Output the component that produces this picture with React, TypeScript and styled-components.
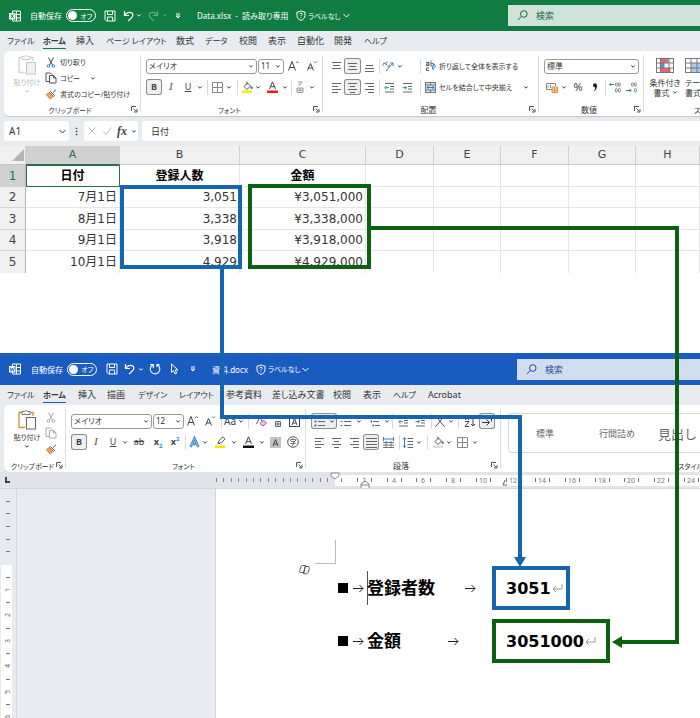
import React from 'react';
import styled, { createGlobalStyle } from 'styled-components';

const UI_FONT = '"Noto Sans", "Noto Sans CJK JP", sans-serif';
const CELL_FONT = '"DejaVu Sans", "Noto Sans CJK JP", sans-serif';
const BLUE = '#1467ae';
const GREEN = '#0b610e';

const GlobalStyle = createGlobalStyle`
  *, *::before, *::after { box-sizing: border-box; }
  html, body { margin: 0; padding: 0; background: #fff; }
  body { font-family: ${UI_FONT}; font-size: 9px; color: #333; overflow-x: hidden; }
  button, input, select { font: inherit; color: inherit; margin: 0; padding: 0; border: 0; background: none; min-width: 0; }
  svg { display: block; flex: none; overflow: visible; }
`;

/* ---------- layout parts ---------- */

const Page = styled.div`
  position: relative;
  display: flex;
  flex-direction: column;
  min-height: 100vh;
  overflow: hidden;
`;

const ExcelWindow = styled.section`
  background: #e8ecf0;
  margin-bottom: 80px;
`;

const WordWindow = styled.section`
  flex: 1;
  display: flex;
  flex-direction: column;
  background: #e8ecf0;
`;

const TitleBar = styled.header<{ $bg: string; $h: number }>`
  display: flex;
  align-items: center;
  height: ${p => p.$h}px;
  background: ${p => p.$bg};
  color: #fff;
`;

const TitleTools = styled.div<{ $cols: string; $w: number }>`
  display: grid;
  flex: 0 0 ${p => p.$w}px;
  grid-template-columns: ${p => p.$cols};
  align-items: center;
  padding-left: 9px;
  white-space: nowrap;
`;

const TitleText = styled.span<{ $small?: boolean }>`
  font-size: ${p => (p.$small ? 7 : 8)}px;
  font-feature-settings: "palt";
`;

const IconButton = styled.button<{ $dim?: boolean }>`
  display: flex;
  align-items: center;
  opacity: ${p => (p.$dim ? 0.35 : 1)};
`;

const Toggle = styled.label`
  display: flex;
  align-items: center;
  gap: 3px;
  width: 30px;
  height: 13px;
  padding: 0 1px;
  border: 1px solid #fff;
  border-radius: 7px;
`;

const ToggleKnob = styled.input`
  appearance: none;
  width: 9px;
  height: 9px;
  border-radius: 50%;
  background: #fff;
  flex: none;
`;

const SearchBox = styled.label<{ $bg: string; $fg: string }>`
  display: flex;
  flex: 1;
  align-items: center;
  gap: 8px;
  height: 21px;
  padding-left: 9px;
  background: ${p => p.$bg};
  color: ${p => p.$fg};
  input { flex: 1; font-size: 9px; }
  input::placeholder { color: ${p => p.$fg}; opacity: 1; }
`;

const TabRow = styled.nav<{ $cols: string }>`
  display: grid;
  grid-template-columns: ${p => p.$cols};
  justify-content: start;
  align-items: start;
  height: 20px;
  padding: 3px 0 0 7px;
`;

const Tab = styled.button<{ $active?: boolean; $line: string; $small?: boolean }>`
  justify-self: start;
  height: 15px;
  font-size: ${p => (p.$small ? 8 : 9)}px;
  line-height: 14px;
  white-space: nowrap;
  font-feature-settings: "palt";
  font-weight: ${p => (p.$active ? 700 : 400)};
  border-bottom: 1px solid ${p => (p.$active ? p.$line : 'transparent')};
`;

const Ribbon = styled.div<{ $h: number }>`
  display: flex;
  height: ${p => p.$h}px;
  margin-left: 4px;
  background: #fff;
  border-radius: 5px 0 0 5px;
  box-shadow: 0 1px 1px #c3c8ce;
  overflow: hidden;
`;

const Group = styled.div<{ $w?: number; $top: number }>`
  display: flex;
  flex-direction: column;
  flex: ${p => (p.$w ? `0 0 ${p.$w}px` : '1 0 0')};
  min-width: 0;
  padding: ${p => p.$top}px 0 0 5px;
  background: linear-gradient(#dcdcdc, #dcdcdc) right 4px / 1px calc(100% - 8px) no-repeat;
  &:last-child { background: none; }
`;

const GroupRows = styled.div`
  display: flex;
  flex-direction: column;
  gap: 5px;
`;

const GroupFoot = styled.div<{ $start?: number; $small?: boolean }>`
  display: flex;
  align-items: center;
  height: 13px;
  margin-top: auto;
  padding-left: ${p => p.$start ?? 0}px;
  font-size: ${p => (p.$small ? 7 : 8)}px;
  white-space: nowrap;
  font-feature-settings: "palt";
  span { flex: ${p => (p.$start ? 'none' : 1)}; text-align: center; }
  button { width: 10px; }
`;

const ToolRow = styled.div`
  display: flex;
  align-items: center;
  height: 16px;
`;

const Tool = styled.button<{ $w: number; $on?: boolean }>`
  display: flex;
  align-items: center;
  justify-content: center;
  flex: 0 0 ${p => p.$w}px;
  height: 16px;
  border-radius: 3px;
  background: ${p => (p.$on ? '#efefef' : 'none')};
  box-shadow: ${p => (p.$on ? 'inset 0 0 0 1px #8d8d8d' : 'none')};
`;

const Divider = styled.span<{ $w: number }>`
  flex: 0 0 ${p => p.$w}px;
  height: 15px;
  background: linear-gradient(#d9d9d9, #d9d9d9) center / 1px 100% no-repeat;
`;

const TextTool = styled.button<{ $w: number }>`
  display: flex;
  align-items: center;
  gap: 3px;
  flex: 0 0 ${p => p.$w}px;
  height: 16px;
  font-size: 7px;
  white-space: nowrap;
  font-feature-settings: "palt";
`;

const SelectFrame = styled.span<{ $w: number }>`
  display: grid;
  grid-template-columns: 1fr;
  align-items: center;
  flex: 0 0 ${p => p.$w}px;
  height: 15px;
  margin-right: 1px;
  border: 1px solid #9a9a9a;
  border-radius: 3px;
  > * { grid-area: 1 / 1; }
  svg { justify-self: end; margin-right: 3px; pointer-events: none; }
  select { appearance: none; width: 100%; height: 13px; padding-left: 2px; font-size: 8px; line-height: 12px; font-feature-settings: "palt"; }
`;

const Clipboard = styled.div`
  display: flex;
  height: 50px;
`;

const PasteButton = styled.button<{ $dim?: boolean; $w: number }>`
  display: flex;
  flex-direction: column;
  align-items: center;
  flex: 0 0 ${p => p.$w}px;
  gap: 2px;
  height: 44px;
  font-size: 7px;
  line-height: 11px;
  white-space: nowrap;
  font-feature-settings: "palt";
  opacity: ${p => (p.$dim ? 0.38 : 1)};
`;

const ClipList = styled.div`
  display: flex;
  flex-direction: column;
`;

const BigTool = styled.button<{ $w: number; $left?: boolean }>`
  display: flex;
  flex-direction: column;
  align-items: ${p => (p.$left ? 'flex-start' : 'center')};
  flex: 0 0 ${p => p.$w}px;
  gap: 1px;
  font-size: 8px;
  line-height: 9px;
  white-space: nowrap;
  font-feature-settings: "palt";
  svg + span { margin-top: 4px; }
  span { display: flex; align-items: center; gap: 3px; height: 9px; }
`;

const BigTools = styled.div`
  display: flex;
  gap: 4px;
`;

const FormulaBar = styled.div`
  display: flex;
  align-items: center;
  height: 30px;
  padding-left: 4px;
`;

const NameBox = styled.label`
  display: flex;
  align-items: center;
  width: 65px;
  height: 20px;
  padding: 0 3px 0 5px;
  background: #fff;
  border-radius: 3px;
  input { flex: 1; width: 40px; font-size: 10px; }
`;

const Dots = styled.span`
  flex: 0 0 15px;
  text-align: center;
  font-weight: 700;
`;

const FormulaTools = styled.div`
  display: flex;
  align-items: center;
  width: 54px;
  height: 20px;
  margin-right: 4px;
  background: #fff;
  border-radius: 3px;
`;

const FormulaInput = styled.input`
  flex: 1;
  height: 20px;
  padding-left: 9px;
  background: #fff;
  border-radius: 3px 0 0 3px;
  font-size: 9px;
`;

const Sheet = styled.table`
  width: 100%;
  table-layout: fixed;
  border-collapse: separate;
  border-spacing: 0;
  background: #fff;
  font-family: ${CELL_FONT};
  font-size: 12px;
  line-height: 16px;
`;

const ColHead = styled.th<{ $active?: boolean }>`
  height: 19px;
  padding: 0;
  font-weight: 400;
  font-size: 11px;
  color: ${p => (p.$active ? '#28704a' : '#444')};
  background: ${p => (p.$active ? '#d0d0d0' : '#f0f0f0')};
  border-right: 1px solid ${p => (p.$active ? '#d0d0d0' : '#cfcfcf')};
  border-bottom: 1px solid ${p => (p.$active ? '#28704a' : '#c6c6c6')};
  svg { margin-left: auto; margin-right: 1px; }
`;

const RowHead = styled.th<{ $active?: boolean }>`
  padding: 0;
  font-weight: 400;
  color: ${p => (p.$active ? '#28704a' : '#444')};
  background: ${p => (p.$active ? '#d0d0d0' : '#f0f0f0')};
  border-right: 1px solid #b5b5b5;
  border-bottom: 1px solid #d5d5d5;
`;

const Cell = styled.td<{ $head?: boolean; $selected?: boolean }>`
  height: ${p => (p.$head ? 22 : 21)}px;
  padding: 0 2px;
  text-align: ${p => (p.$head ? 'center' : 'right')};
  font-weight: ${p => (p.$head ? 700 : 400)};
  color: ${p => (p.$head ? '#000' : '#333')};
  border-right: 1px solid #e6e6e6;
  border-bottom: 1px solid #e6e6e6;
  ${p => (p.$selected ? 'border-color: #28704a; outline: 1px solid #28704a; outline-offset: -1px;' : '')}
`;

const DataRow = styled.tr<{ $tall?: boolean }>`
  height: ${p => (p.$tall ? 22 : 21)}px;
  &:last-child > * { border-bottom: 0; }
`;

const Gallery = styled.div`
  display: flex;
  align-items: center;
  height: 40px;
  margin-left: 2px;
  border: 1px solid #d8d8d8;
  border-right: 0;
  border-radius: 4px 0 0 4px;
  overflow: hidden;
`;

const StyleItem = styled.button<{ $w: number; $size: number }>`
  flex: 0 0 ${p => p.$w}px;
  font-size: ${p => p.$size}px;
  color: #666;
  white-space: nowrap;
`;

const RulerStrip = styled.div`
  height: 17px;
  background: #e1e5ea;
  border-bottom: 1px solid #d3d8de;
  overflow: hidden;
`;

const DocumentArea = styled.div`
  flex: 1;
  display: flex;
  min-height: 229px;
`;

const SideRuler = styled.div`
  flex: 0 0 17px;
  border-right: 1px solid #d3d8de;
  overflow: hidden;
  height: 229px;
`;

const Desk = styled.div`
  flex: 0 0 199px;
  border-right: 1px solid #cfd4da;
`;

const Paper = styled.main`
  position: relative;
  flex: 1;
  display: flex;
  flex-direction: column;
  gap: 9px;
  padding: 77px 0 0 121px;
  background: #fff;
  color: #000;
`;

const MarginCorner = styled.span`
  position: absolute;
  left: 99px;
  top: 51px;
  width: 21px;
  height: 24px;
  border-right: 1px solid #bbb;
  border-bottom: 1px solid #bbb;
`;

const CopilotMark = styled.button`
  position: absolute;
  left: 83px;
  top: 75px;
`;

const Paragraph = styled.p`
  display: flex;
  align-items: center;
  height: 44px;
  margin: 0;
  font-family: ${CELL_FONT};
  font-weight: 700;
`;

const Bullet = styled.span`
  width: 10px;
  height: 10px;
  margin: 0 5px 0 1px;
  background: #000;
`;

const Lead = styled.span`
  display: flex;
  flex: 0 0 125px;
  align-items: center;
  font-size: 17px;
  line-height: 20px;
`;

const BulletTab = styled.span`
  flex: 0 0 14px;
`;

const Caret = styled.span`
  width: 1px;
  height: 34px;
  margin-right: -1px;
  background: #555;
`;

const TabMark = styled.span`
  display: flex;
  flex: 1;
  justify-content: center;
  padding-left: 14px;
`;

const ValueBox = styled.span<{ $color: string; $w: number }>`
  display: flex;
  align-items: center;
  gap: 1px;
  width: ${p => p.$w}px;
  height: 44px;
  padding-left: 10px;
  border: 4px solid ${p => p.$color};
  font-size: 16px;
`;

const Annotations = styled.svg`
  position: absolute;
  left: 0;
  top: 0;
  pointer-events: none;
`;

/* ---------- icons ---------- */

type IconProps = { w?: number; h?: number; children: React.ReactNode; c?: string; sw?: number };
const Icon = ({ w = 12, h = 12, c = 'currentColor', sw = 1, children }: IconProps) => (
  <svg width={w} height={h} viewBox={`0 0 ${w} ${h}`} fill="none" stroke={c} strokeWidth={sw} aria-hidden="true">
    {children}
  </svg>
);

const Chev = ({ big = false }: { big?: boolean }) =>
  big ? <Icon w={7} h={5}><path d="M.5 1l3 3 3-3" /></Icon> : <Icon w={4} h={3}><path d="M.3.5L2 2.2 3.7.5" /></Icon>;

const AppLogo = ({ letter }: { letter: string }) => (
  <Icon w={12} h={12}>
    <path d="M3.5 3V1h8v10h-8V9M7.5 1v10M7.5 4.5h4M7.5 8h4" />
    <rect x="0" y="3" width="6.5" height="6.5" fill="currentColor" stroke="none" />
    {letter === 'X' ? <path d="M1.8 4.2l3 4M4.8 4.2l-3 4" stroke="#107c41" /> : <path d="M1 4.4l1.1 3.8 1.2-3.2 1.2 3.2 1-3.8" stroke="#185abd" strokeWidth=".8" />}
  </Icon>
);
const SaveIcon = () => <Icon><path d="M1 1h10v10H2.5L1 9.5zM3.5 1v3.5h5V1M3.5 11V7h5v4" /></Icon>;
const UndoIcon = () => <Icon w={11} sw={1.2}><path d="M1.5 1v4.5H6M1.5 5.5C4 1.5 9.800 1.200 9.800 5c0 2.500-2.300 3.800-4.800 6" /></Icon>;
const RedoIcon = () => <Icon w={11} sw={1.2}><path d="M9.500 1v4.500H5M9.500 5.500C7 1.500 1.200 1.200 1.200 5c0 2.500 2.300 3.800 4.800 6" /></Icon>;
const RepeatIcon = () => <Icon sw={1.1}><path d="M4 1.700A4.800 4.800 0 1 0 8.300 1.800M4.300 5V1.500H1M10.500 1.500H8V4" /></Icon>;
const PointerIcon = () => <Icon w={9} h={12}><path d="M1.500 1v8.500l2-2 1.600 3.500 1.600-.8L5.200 7H8z" /></Icon>;
const CustomizeIcon = () => <Icon w={6} h={6}><path d="M1 1h4M1 3h4L3 5z" /></Icon>;
const ShieldIcon = () => (
  <Icon w={10} h={11}><path d="M5 .8c1.200.8 2.500 1.200 4 1.200v3.500C9 8 7.500 9.500 5 10.400 2.500 9.500 1 8 1 5.500V2c1.500 0 2.800-.4 4-1.200zM3.700 4.200C3.700 2.800 6.300 2.800 6.300 4.200 6.300 5 5 5 5 6.200M5 7.300v.8" /></Icon>
);
const SearchIcon = () => <Icon w={11} h={11}><circle cx="6.800" cy="4" r="3.300" /><path d="M4.400 6.400L.8 10" /></Icon>;
const Launcher = () => <Icon w={7} h={7} c="#555"><path d="M.5 5V.5H5M2.500 2.500l3 3M6 3v3H3" /></Icon>;

const PasteIcon = ({ dim = false }: { dim?: boolean }) => {
  const board = dim ? '#888' : '#dd8a3a';
  return (
    <Icon w={20} h={21} c={board}>
      <path d="M8 18.500H2v-15h3M13 3.500h3V7" strokeWidth="1.300" />
      <path d="M5 5.500v-3h2.500a1.700 1.700 0 0 1 3 0H13v3z" stroke="#777" fill="#fff" />
      <rect x="9.500" y="8.500" width="9" height="11.500" fill={dim ? '#ddd' : '#fff'} stroke="#666" />
    </Icon>
  );
};
const CutIcon = ({ dim = false }: { dim?: boolean }) => (
  <Icon w={12} h={11} c={dim ? '#aaa' : '#444'}>
    <path d="M3.500.5l4 7.500M8.500.5l-4 7.500" />
    <circle cx="3.500" cy="9" r="1.300" stroke={dim ? '#aaa' : '#2f86c8'} /><circle cx="8.500" cy="9" r="1.300" stroke={dim ? '#aaa' : '#2f86c8'} />
  </Icon>
);
const CopyIcon = ({ dim = false }: { dim?: boolean }) => (
  <Icon w={12} h={12} c={dim ? '#aaa' : '#555'}><path d="M4 9.500H1V1h4.500L7 2.500M4.500 3.500h4l2.500 2.500v5H4.500zM8.500 3.500V6H11" /></Icon>
);
const BrushIcon = () => (
  <Icon w={12} h={11} c="#555"><path d="M11 .8L8 3.500M5.500 2.500l4 4-1 1-4-4z" /><path d="M4.200 3.700L1.300 5.500l4 4.700L7.800 7.300z" fill="#f3a65a" stroke="#d9822b" /></Icon>
);

type TextIconProps = { t: string; size?: number; bold?: boolean; italic?: boolean; under?: boolean; strike?: boolean; c?: string; serif?: boolean };
const Glyph = styled.span<{ $size: number; $b?: boolean; $i?: boolean; $u?: boolean; $s?: boolean; $c: string; $serif?: boolean }>`
  font-family: ${p => (p.$serif ? '"Liberation Serif", serif' : UI_FONT)};
  font-size: ${p => p.$size}px;
  line-height: 12px;
  font-weight: ${p => (p.$b ? 700 : 400)};
  font-style: ${p => (p.$i ? 'italic' : 'normal')};
  text-decoration: ${p => (p.$u ? 'underline' : p.$s ? 'line-through' : 'none')};
  color: ${p => p.$c};
  sub, sup { font-size: 6px; line-height: 0; color: #2f7fc0; }
`;
const G = ({ t, size = 9, bold, italic, under, strike, c = '#444', serif }: TextIconProps) => (
  <Glyph $size={size} $b={bold} $i={italic} $u={under} $s={strike} $c={c} $serif={serif}>{t}</Glyph>
);

const SizeIcon = ({ down = false }: { down?: boolean }) => (
  <Icon w={12} h={12} c="#444">
    <path d={down ? 'M1.500 10.500L4.500 3.500l3 7M2.500 8h4' : 'M.5 10.500L4 1.500l3.500 9M1.700 7.500h4.600'} />
    <path d={down ? 'M8 1.500l1.500 1.500L11 1.500' : 'M8 3l1.500-1.500L11 3'} stroke="#2f7fc0" />
  </Icon>
);
const BordersIcon = () => <Icon w={11} h={11} c="#888"><path d="M.5.5h10v10H.5zM5.500.5v10M.5 5.500h10" /></Icon>;
const FillIcon = ({ bar = '#f4ec00' }: { bar?: string }) => (
  <Icon w={11} h={12} c="#555"><path d="M2 5.500L5.500 2l3 3L5 8.500zM5 .5v3" /><path d="M9.700 5.500c1 1.500 1 2-.1 2s-1-.6.1-2" stroke="#2f7fc0" fill="#2f7fc0" /><rect x="0" y="9.500" width="10" height="2.500" fill={bar} stroke="none" /></Icon>
);
const FontColorIcon = ({ bar = '#e02020' }: { bar?: string }) => (
  <Icon w={11} h={12} c="#444"><path d="M2.500 8L5.500.8 8.500 8M3.500 5.700h4" /><rect x="0" y="9.500" width="11" height="2.500" fill={bar} stroke="none" /></Icon>
);
const MarkerIcon = () => <Icon w={11} h={12} c="#555"><path d="M3 7.500l1-3L8 .8l2 2-3.700 4zM3 7.500h2" /><rect x="0" y="9.500" width="10" height="2.500" fill="#f4ec00" stroke="none" /></Icon>;
const RubyIcon = () => <Icon w={8} h={12} c="#999"><path d="M2 1h4L4.500 3.500M3.500 2.500L3 5M1 7h6v4.500H1zM4 7v4.500M1 9.200h6" /></Icon>;
const EffectIcon = () => <Icon w={11} h={11}><path d="M1.500 10L5.500 1.300 9.500 10M3 7h5" stroke="#2f7fc0" strokeWidth="2.300" /><path d="M1.500 10L5.500 1.300 9.500 10M3 7h5" stroke="#bfe0f7" strokeWidth=".6" /></Icon>;

type LinesProps = { rows: [number, number, number][]; w?: number };
const Lines = ({ rows, w = 11 }: LinesProps) => (
  <Icon w={w} h={11} c="#666">{rows.map(([y, a, b]) => <path key={y} d={`M${a} ${y}.5H${b}`} />)}</Icon>
);
const TopIcon = () => <Lines rows={[[1, 1, 10], [4, 2, 9], [7, 1, 10]]} />;
const MidIcon = () => <Lines rows={[[2, 1, 10], [5, 2, 9], [8, 1, 10]]} />;
const BottomIcon = () => <Lines rows={[[4, 2, 9], [7, 1, 10], [10, 1, 10]]} />;
const LeftIcon = () => <Lines rows={[[1, 1, 10], [4, 1, 7], [7, 1, 10], [10, 1, 7]]} />;
const CenterIcon = () => <Lines rows={[[1, 1, 10], [4, 3, 8], [7, 1, 10], [10, 3, 8]]} />;
const RightIcon = () => <Lines rows={[[1, 1, 10], [4, 4, 10], [7, 1, 10], [10, 4, 10]]} />;
const JustifyIcon = () => <Lines rows={[[1, 0, 11], [4, 0, 11], [7, 0, 11], [10, 0, 11]]} />;
const DistributeIcon = () => <Icon w={11} h={11} c="#2f7fc0"><path d="M.5 0v4M10.500 0v4M1 2h9" /><path d="M0 5.500h11M0 8h11M0 10.500h11M3 4v6M8 4v6" stroke="#777" /></Icon>;
const IndentIcon = ({ out = false }: { out?: boolean }) => (
  <Icon w={11} h={11} c="#666"><path d="M1 1.500h9M6 4.500h4M6 7h4M1 10h9" /><path d={out ? 'M5 5.700H1M2.500 4L1 5.700l1.500 1.700' : 'M.5 5.700h4M3 4l1.500 1.700L3 7.400'} stroke="#2f7fc0" /></Icon>
);
const OrientIcon = () => <Icon w={12} h={12} c="#555"><path d="M1.500 5.500a1.300 1.300 0 1 1 2-1.500l1.500 1M4 3.500l1.500-2M5.500 6.500c1.500.5 2-1 1.500-2" /><path d="M4 11l7-8M8 3h3v3" stroke="#2f7fc0" /></Icon>;
const WrapIcon = () => <Icon w={11} h={12} c="#555"><path d="M1 2.500h3v3H1.500V4H4M1.500 8h2.500M1.500 10.500H4M1.500 8v2.500" /><path d="M6 .5V6h2.500V3.500H6M7 8h1.500c2.500 0 2-4 0-4M8.500 6.500L7 8l1.500 2" stroke="#2f7fc0" /></Icon>;
const MergeIcon = () => <Icon w={11} h={11} c="#2f7fc0"><rect x=".5" y=".5" width="10" height="10" fill="#cfe6f7" stroke="#777" /><path d="M.5 3h10M.5 8h10M5.500.5V3M5.500 8v2.500" stroke="#777" /><path d="M2 5.500h7M3.500 4L2 5.500 3.500 7M7.500 4L9 5.500 7.500 7" /></Icon>;
const MoneyIcon = () => <Icon w={12} h={12} c="#888"><path d="M6 8.500H.5v-6h9V5M2 4.500v2M4.500 4v3" /><path d="M6 6h5.500v5.500H6zM6 8h5.500M6 9.800h5.500M8.700 6v5.500" stroke="#e08a30" /></Icon>;
const CommaIcon = () => <Icon w={6} h={9}><path d="M1 2.300a2 2 0 1 1 4 0C5 5.500 4 7.500 1.500 8.500 3 7 3.300 5.500 3 4.300 1.800 4.300 1 3.500 1 2.300z" fill="#222" stroke="none" /></Icon>;
const DecimalIcon = ({ dec = false }: { dec?: boolean }) => (
  <Icon w={12} h={11} c="#888"><rect x="6.500" y=".8" width="1.800" height="3.500" rx=".9" /><rect x="9.500" y=".8" width="1.800" height="3.500" rx=".9" /><rect x="9.500" y="6.500" width="1.800" height="3.500" rx=".9" />{!dec && <rect x="6.500" y="6.500" width="1.800" height="3.500" rx=".9" />}
    <path d={dec ? 'M1 8.500h5M4.500 7L6 8.500 4.500 10' : 'M5 2.500H.8M2.300 1L.8 2.500 2.300 4'} stroke="#2f7fc0" /></Icon>
);
const CondIcon = () => (
  <Icon w={18} h={15} c="#777"><rect x=".5" y=".5" width="17" height="14" fill="#fff" /><rect x="4.500" y="1" width="8" height="4" fill="#ee6374" stroke="none" /><rect x="4.500" y="5" width="4" height="5" fill="#4f93d2" stroke="none" /><rect x="4.500" y="10" width="10" height="4" fill="#ee6374" stroke="none" /><path d="M.5 5h17M.5 10h17M4.500.5v14M13 .5v14" /></Icon>
);
const TableIcon = () => <Icon w={18} h={15} c="#777"><rect x=".5" y=".5" width="17" height="14" fill="#fff" /><rect x="6" y="5" width="11" height="9" fill="#a9cdec" stroke="none" /><path d="M.5 5h17M.5 10h17M6 .5v14M12 .5v14" /></Icon>;
const BulletsIcon = ({ kind = 0 }: { kind?: number }) => (
  <Icon w={12} h={11} c="#666"><path d={kind === 2 ? 'M3 1.500h7M5 5.500h6M7 9.500h5' : 'M4 1.500h7M4 5.500h7M4 9.500h7'} /><path d={kind === 2 ? 'M0 1.500h1.500M2.500 5.500H4M4.500 9.500H6' : 'M.5 1.500H2.500M.5 5.500H2.500M.5 9.500H2.500'} stroke="#2f7fc0" strokeWidth={kind === 1 ? 1 : 2} /></Icon>
);
const SpacingIcon = () => <Icon w={12} h={11} c="#666"><path d="M5.500 1.500H11M5.500 4.500H11M5.500 7.500H11M5.500 10.500H11" /><path d="M2.500.5v10M1 2.500L2.500.5 4 2.500M1 8.500l1.500 2 1.500-2" stroke="#2f7fc0" /></Icon>;
const AsianIcon = () => <Icon w={12} h={11} c="#444"><path d="M1.500 10.500L6 5.500l4.500 5M6 5.500L3 1M6 5.500L9 1" /></Icon>;
const SortIcon = () => <Icon w={12} h={11} c="#444"><path d="M1 5.500h4l-4 5h4M1.500 4L3 .5 4.500 4M9 .5v9.500M7 8l2 2 2-2" /></Icon>;
const MarksIcon = () => <Icon w={12} h={11} c="#333"><path d="M1 6.500h7M5.500 3.500l3 3-3 3M10.500 1.500v4" /></Icon>;
const EraserIcon = () => <Icon w={11} h={12} c="#555"><path d="M.5 9L4 1.500 6.500 7" /><path d="M4 8.500l3.500-3.500 3 3L7 11z" stroke="#9c4bb5" fill="#e7c9f0" /></Icon>;
const RubyBoxIcon = () => <Icon w={10} h={12} c="#666"><path d="M3.500 1h3M5 1v3M2.500 6.500h5v5h-5zM2.500 9h5M5 6.500v5" /></Icon>;
const BoxAIcon = ({ fill = 'none' }: { fill?: string }) => <Icon w={11} h={11} c="#444"><rect x=".5" y=".5" width="10" height="10" fill={fill} stroke={fill === 'none' ? '#444' : fill} /><path d="M3 9l2.500-6.500L8 9M4 7h3" /></Icon>;
const CircledIcon = () => <Icon w={12} h={12} c="#555"><circle cx="6" cy="6" r="5.300" /><path d="M6 2v1.500M3.500 5V3.500h5V5M4 5.500h4L6 7v2.500H5M3.500 7.500h5" strokeWidth=".8" /></Icon>;
const ArrowMark = () => <Icon w={11} h={9} c="#222"><path d="M0 4.500h10M6.500 1l3.500 3.500L6.500 8" /></Icon>;
const ReturnMark = () => <Icon w={11} h={10} c="#999"><path d="M10 1v5H1M4 3L1 6l3 3" /></Icon>;
const CopilotIcon = () => <Icon w={11} h={11} c="#555"><path d="M4 1.500h2.500L4.700 8.500H2C.5 8.500.5 7 1 5.500L1.800 3C2.200 2 3 1.500 4 1.500zM7 9.800H4.500L6.300 2.500H9c1.500 0 1.500 1.500 1 3L9.200 8.300C8.800 9.300 8 9.800 7 9.800z" /></Icon>;

/* ---------- shared pieces ---------- */

type Item = { sep: number } | { gap: number } | { icon: React.ReactNode; w: number; on?: boolean; label: string };
const Gap = styled.span<{ $w: number }>`flex: 0 0 ${p => p.$w}px;`;

const Tools = ({ items }: { items: Item[] }) => (
  <>
    {items.map((it, i) =>
      'sep' in it ? <Divider key={i} $w={it.sep} /> :
      'gap' in it ? <Gap key={i} $w={it.gap} /> :
      <Tool key={i} type="button" $w={it.w} $on={it.on} aria-label={it.label}>{it.icon}</Tool>
    )}
  </>
);
const more = (w: number): Item => ({ icon: <Chev />, w, label: 'その他' });

const Pick = ({ value, w, label }: { value: string; w: number; label: string }) => (
  <SelectFrame $w={w}>
    <select aria-label={label} defaultValue={value}><option>{value}</option></select>
    <Chev />
  </SelectFrame>
);

const Foot = ({ text, start, launch = true }: { text: string; start?: number; launch?: boolean }) => (
  <GroupFoot $start={start} $small={/^[ァ-ヴー]+$/.test(text)}>
    <span>{text}</span>
    {launch && <button type="button" aria-label={`${text}の設定`}><Launcher /></button>}
  </GroupFoot>
);

const AutoSave = () => (
  <Toggle><ToggleKnob type="checkbox" role="switch" aria-label="自動保存" /><TitleText $small>オフ</TitleText></Toggle>
);

const Search = ({ bg, fg }: { bg: string; fg: string }) => (
  <SearchBox $bg={bg} $fg={fg}><SearchIcon /><input type="search" placeholder="検索" aria-label="検索" /></SearchBox>
);

const Btn = ({ label, dim, children }: { label: string; dim?: boolean; children: React.ReactNode }) => (
  <IconButton type="button" aria-label={label} $dim={dim}>{children}</IconButton>
);

const Tabs = ({ names, cols, line }: { names: string[]; cols: string; line: string }) => (
  <TabRow $cols={cols}>
    {names.map(n => (
      <Tab key={n} type="button" $active={n === 'ホーム'} $line={line} $small={/^[ァ-ヴー ]+$/.test(n)}>{n}</Tab>
    ))}
  </TabRow>
);

/* ---------- Excel ---------- */

const sheetRows = [
  ['7月1日', '3,051', '¥3,051,000'],
  ['8月1日', '3,338', '¥3,338,000'],
  ['9月1日', '3,918', '¥3,918,000'],
  ['10月1日', '4,929', '¥4,929,000'],
];
const colNames = ['A', 'B', 'C', 'D', 'E', 'F', 'G', 'H'];
const colWidths = [26, 94, 120, 126, 68, 67, 68, 67];

const Excel = () => (
  <ExcelWindow>
    <TitleBar $bg="#107c41" $h={31}>
      <TitleTools $w={508} $cols="21px 36px 38px 19px 14px 11px 15px 12px 22px 99px 12px 35px 8px">
        <AppLogo letter="X" />
        <TitleText>自動保存</TitleText>
        <AutoSave />
        <Btn label="保存"><SaveIcon /></Btn>
        <Btn label="元に戻す"><UndoIcon /></Btn>
        <Btn label="履歴"><Chev /></Btn>
        <Btn label="やり直し" dim><RedoIcon /></Btn>
        <Btn label="やり直し履歴" dim><Chev /></Btn>
        <Btn label="カスタマイズ"><CustomizeIcon /></Btn>
        <TitleText>Data.xlsx&nbsp; -&nbsp; 読み取り専用</TitleText>
        <ShieldIcon />
        <TitleText $small>ラベルなし</TitleText>
        <Btn label="ラベル"><Chev big /></Btn>
      </TitleTools>
      <Search bg="#cfe3d8" fg="#1b6b3f" />
    </TitleBar>
    <Tabs
      line="#107c41"
      cols="36px 33px 30px 70px 29px 34px 29px 29px 37px 30px 30px"
      names={['ファイル', 'ホーム', '挿入', 'ページ レイアウト', '数式', 'データ', '校閲', '表示', '自動化', '開発', 'ヘルプ']}
    />
    <Ribbon $h={65}>
      <Group $w={137} $top={3}>
        <Clipboard>
          <PasteButton type="button" $dim $w={36}><PasteIcon dim />貼り付け<Chev /></PasteButton>
          <ClipList>
            <TextTool type="button" $w={16}><CutIcon />切り取り</TextTool>
            <TextTool type="button" $w={16}><CopyIcon />コピー<Gap $w={5} /><Chev /></TextTool>
            <TextTool type="button" $w={16}><BrushIcon />書式のコピー/貼り付け</TextTool>
          </ClipList>
        </Clipboard>
        <Foot text="クリップボード" />
      </Group>
      <Group $w={182} $top={7}>
        <GroupRows>
          <ToolRow>
            <Pick label="フォント名" value="メイリオ" w={111} />
            <Pick label="フォント サイズ" value="11" w={26} />
            <Tools items={[{ icon: <SizeIcon />, w: 18, label: '拡大' }, { icon: <SizeIcon down />, w: 18, label: '縮小' }]} />
          </ToolRow>
          <ToolRow>
            <Tools items={[
              { icon: <G t="B" bold />, w: 16, on: true, label: '太字' },
              { icon: <G t="I" italic serif size={10} />, w: 18, label: '斜体' },
              { icon: <G t="U" under />, w: 16, label: '下線' }, more(8), { sep: 6 },
              { icon: <BordersIcon />, w: 14, label: '罫線' }, more(10), { sep: 6 },
              { icon: <FillIcon />, w: 14, label: '塗りつぶし' }, more(8),
              { icon: <FontColorIcon />, w: 20, label: '文字色' }, more(6), { sep: 6 },
              { icon: <RubyIcon />, w: 12, label: 'ふりがな' }, more(12),
            ]} />
          </ToolRow>
        </GroupRows>
        <Foot text="フォント" />
      </Group>
      <Group $w={216} $top={7}>
        <GroupRows>
          <ToolRow>
            <Tools items={[
              { icon: <TopIcon />, w: 16, label: '上揃え' }, { icon: <MidIcon />, w: 17, on: true, label: '上下中央' },
              { icon: <BottomIcon />, w: 16, label: '下揃え' }, { sep: 4 },
              { icon: <OrientIcon />, w: 14, label: '方向' }, more(10), { gap: 12 }, { sep: 6 }, { gap: 2 },
            ]} />
            <TextTool type="button" $w={100}><WrapIcon />折り返して全体を表示する</TextTool>
          </ToolRow>
          <ToolRow>
            <Tools items={[
              { icon: <LeftIcon />, w: 16, label: '左揃え' }, { icon: <CenterIcon />, w: 17, on: true, label: '中央揃え' },
              { icon: <RightIcon />, w: 16, label: '右揃え' }, { sep: 4 },
              { icon: <IndentIcon out />, w: 16, label: 'インデント減' }, { icon: <IndentIcon />, w: 20, label: 'インデント増' }, { sep: 6 }, { gap: 2 },
            ]} />
            <TextTool type="button" $w={98}><MergeIcon />セルを結合して中央揃え</TextTool>
            <Tools items={[more(6)]} />
          </ToolRow>
        </GroupRows>
        <Foot text="配置" />
      </Group>
      <Group $w={105} $top={7}>
        <GroupRows>
          <ToolRow><Pick label="表示形式" value="標準" w={95} /></ToolRow>
          <ToolRow>
            <Tools items={[
              { icon: <MoneyIcon />, w: 16, label: '通貨' }, more(8),
              { icon: <G t="%" size={11} />, w: 20, label: 'パーセント' }, { icon: <CommaIcon />, w: 14, label: '桁区切り' }, { sep: 6 },
              { icon: <DecimalIcon />, w: 14, label: '小数点増' }, { icon: <DecimalIcon dec />, w: 18, label: '小数点減' },
            ]} />
          </ToolRow>
        </GroupRows>
        <Foot text="数値" />
      </Group>
      <Group $top={7}>
        <BigTools>
          <BigTool type="button" $w={32}><CondIcon /><span>条件付き</span><span>書式<Chev /></span></BigTool>
          <BigTool type="button" $w={50} $left><TableIcon /><span>テーブルとして</span><span>書式設定<Chev /></span></BigTool>
        </BigTools>
        <Foot text="スタイル" start={45} launch={false} />
      </Group>
    </Ribbon>
    <FormulaBar>
      <NameBox><input aria-label="名前ボックス" defaultValue="A1" /><Chev big /></NameBox>
      <Dots>⋮</Dots>
      <FormulaTools>
        <Tools items={[
          { icon: <Icon w={8} h={8} c="#bbb"><path d="M.5.5l7 7M7.500.5l-7 7" /></Icon>, w: 16, label: 'キャンセル' },
          { icon: <Icon w={9} h={8} c="#bbb"><path d="M.5 4.500l2.500 3 5.500-7" /></Icon>, w: 14, label: '入力' },
          { icon: <G t="fx" italic bold serif size={12} />, w: 16, label: '関数の挿入' },
          { icon: <Chev />, w: 8, label: '関数' },
        ]} />
      </FormulaTools>
      <FormulaInput aria-label="数式バー" defaultValue="日付" />
    </FormulaBar>
    <Sheet>
      <colgroup>{colWidths.map((w, i) => <col key={i} width={w} />)}<col /></colgroup>
      <thead>
        <tr>
          <ColHead><Icon w={12} h={12}><path d="M12 0v12H0z" fill="#b5b5b5" stroke="none" /></Icon></ColHead>
          {colNames.map(n => <ColHead key={n} scope="col" $active={n === 'A'}>{n}</ColHead>)}
        </tr>
      </thead>
      <tbody>
        <tr>
          <RowHead scope="row" $active>1</RowHead>
          <Cell $head $selected>日付</Cell><Cell $head>登録人数</Cell><Cell $head>金額</Cell>
          {colNames.slice(3).map(n => <Cell key={n} $head />)}
        </tr>
        {sheetRows.map((r, i) => (
          <DataRow key={r[0]} $tall={i % 2 === 1}>
            <RowHead scope="row">{i + 2}</RowHead>
            {r.map(v => <Cell key={v}>{v}</Cell>)}
            {colNames.slice(3).map(n => <Cell key={n} />)}
          </DataRow>
        ))}
      </tbody>
    </Sheet>
  </ExcelWindow>
);

/* ---------- Word ---------- */

const TopRuler = () => (
  <svg width="100%" height="17" aria-hidden="true">
    <rect x="335" y="3" width="100%" height="11" fill="#fff" />
    <path d="M6 5v5h4" stroke="#444" strokeWidth="2" fill="none" />
    {Array.from({ length: 16 }, (_, i) => <rect key={i} x={216 + Math.round(i * 7.4)} y="6" width="1" height="4" fill="#888" />)}
    {Array.from({ length: 12 }, (_, i) => {
      const x = 364 + Math.round(i * 29.7);
      return (
        <g key={i} fill="#777">
          <rect x={x - 7} y="6" width="1" height="4" />
          <text x={x} y="11" fontSize="7" textAnchor="middle">{i * 2 + 2}</text>
          <rect x={x + 7} y="6" width="1" height="4" />
        </g>
      );
    })}
    <rect x="341" y="6" width="1" height="4" fill="#888" />
    <path d="M331 1h8v3l-4 3-4-3zM361 17v-5l4-3 4 3v5zM361 13h8" fill="#fff" stroke="#888" />
    <path d="M505 8l-2 5h4" fill="none" stroke="#666" />
  </svg>
);

const LeftRuler = () => (
  <svg width="16" height="229" aria-hidden="true">
    <rect x="1" y="76" width="11" height="153" fill="#fff" />
    {[12, 24, 37, 50, 62, 88, 113, 139, 164, 190, 215].map(y => <rect key={y} x="6" y={y} width="4" height="1" fill="#777" />)}
    {[1, 2, 3, 4, 5, 6].map(n => (
      <text key={n} fontSize="7" fill="#666" textAnchor="middle" transform={`translate(10 ${75 + Math.round(n * 25.5)}) rotate(-90)`}>{n}</text>
    ))}
  </svg>
);

const Word = () => (
  <WordWindow>
    <TitleBar $bg="#1a5bbf" $h={32}>
      <TitleTools $w={517} $cols="22px 36px 39px 18px 15px 10px 21px 20px 22px 44px 12px 34px 8px">
        <AppLogo letter="W" />
        <TitleText>自動保存</TitleText>
        <AutoSave />
        <Btn label="保存"><SaveIcon /></Btn>
        <Btn label="元に戻す"><UndoIcon /></Btn>
        <Btn label="履歴"><Chev /></Btn>
        <Btn label="繰り返し"><RepeatIcon /></Btn>
        <Btn label="タッチ"><PointerIcon /></Btn>
        <Btn label="カスタマイズ"><CustomizeIcon /></Btn>
        <TitleText>資料.docx</TitleText>
        <ShieldIcon />
        <TitleText $small>ラベルなし</TitleText>
        <Btn label="ラベル"><Chev big /></Btn>
      </TitleTools>
      <Search bg="#d1dcef" fg="#1f4f9c" />
    </TitleBar>
    <Tabs
      line="#185abd"
      cols="36px 35px 29px 31px 41px 47px 46px 61px 30px 30px 35px 40px"
      names={['ファイル', 'ホーム', '挿入', '描画', 'デザイン', 'レイアウト', '参考資料', '差し込み文書', '校閲', '表示', 'ヘルプ', 'Acrobat']}
    />
    <Ribbon $h={67}>
      <Group $w={62} $top={4}>
        <Clipboard>
          <PasteButton type="button" $w={36}><PasteIcon />貼り付け<Chev /></PasteButton>
          <ClipList>
            <Tool type="button" $w={16} aria-label="切り取り"><CutIcon dim /></Tool>
            <Tool type="button" $w={16} aria-label="コピー"><CopyIcon dim /></Tool>
            <Tool type="button" $w={16} aria-label="書式のコピー"><BrushIcon /></Tool>
          </ClipList>
        </Clipboard>
        <Foot text="クリップボード" />
      </Group>
      <Group $w={240} $top={8}>
        <GroupRows>
          <ToolRow>
            <Pick label="フォント名" value="メイリオ" w={81} />
            <Pick label="フォント サイズ" value="12" w={31} />
            <Tools items={[
              { icon: <SizeIcon />, w: 16, label: '拡大' }, { icon: <SizeIcon down />, w: 18, label: '縮小' }, { sep: 4 },
              { icon: <G t="Aa" size={10} />, w: 14, label: '文字種' }, more(8), { sep: 6 },
              { icon: <EraserIcon />, w: 20, label: '書式クリア' }, { icon: <RubyBoxIcon />, w: 14, label: 'ルビ' }, { icon: <BoxAIcon />, w: 18, label: '囲み線' },
            ]} />
          </ToolRow>
          <ToolRow>
            <Tools items={[
              { icon: <G t="B" bold />, w: 16, on: true, label: '太字' },
              { icon: <G t="I" italic serif size={10} />, w: 18, label: '斜体' },
              { icon: <G t="U" under />, w: 16, label: '下線' }, more(8),
              { icon: <G t="ab" strike />, w: 20, label: '取り消し線' },
              { icon: <Glyph $size={9} $b $c="#444">x<sub>2</sub></Glyph>, w: 18, label: '下付き' },
              { icon: <Glyph $size={9} $b $c="#444">x<sup>2</sup></Glyph>, w: 16, label: '上付き' }, { sep: 4 },
              { icon: <EffectIcon />, w: 14, label: '文字の効果' }, more(8),
              { icon: <MarkerIcon />, w: 22, label: '蛍光ペン' }, more(6),
              { icon: <FontColorIcon bar="#111" />, w: 22, label: '文字色' }, more(6),
              { icon: <BoxAIcon fill="#c4c4c4" />, w: 20, label: '網かけ' }, { icon: <CircledIcon />, w: 16, label: '囲い文字' },
            ]} />
          </ToolRow>
        </GroupRows>
        <Foot text="フォント" />
      </Group>
      <Group $w={195} $top={8}>
        <GroupRows>
          <ToolRow>
            <Tools items={[
              { icon: <><BulletsIcon /><Gap $w={4} /><Chev /></>, w: 26, on: true, label: '箇条書き' },
              { icon: <BulletsIcon kind={1} />, w: 18, label: '段落番号' }, more(8),
              { icon: <BulletsIcon kind={2} />, w: 22, label: 'アウトライン' }, more(4), { sep: 6 },
              { icon: <IndentIcon out />, w: 16, label: 'インデント減' }, { icon: <IndentIcon />, w: 18, label: 'インデント増' }, { sep: 4 },
              { icon: <AsianIcon />, w: 14, label: '拡張書式' }, more(8), { sep: 6 },
              { icon: <SortIcon />, w: 18, label: '並べ替え' }, { icon: <MarksIcon />, w: 16, on: true, label: '編集記号' },
            ]} />
          </ToolRow>
          <ToolRow>
            <Tools items={[
              { icon: <LeftIcon />, w: 16, label: '左揃え' }, { icon: <CenterIcon />, w: 18, label: '中央揃え' },
              { icon: <RightIcon />, w: 18, label: '右揃え' }, { icon: <JustifyIcon />, w: 16, on: true, label: '両端揃え' },
              { icon: <DistributeIcon />, w: 18, label: '均等割り付け' }, { sep: 4 },
              { icon: <SpacingIcon />, w: 14, label: '行間' }, more(8), { sep: 8 },
              { icon: <FillIcon bar="#ddd" />, w: 14, label: '塗りつぶし' }, more(8),
              { icon: <BordersIcon />, w: 18, label: '罫線' }, more(8),
            ]} />
          </ToolRow>
        </GroupRows>
        <Foot text="段落" />
      </Group>
      <Group $top={8}>
        <Gallery>
          <StyleItem type="button" $w={72} $size={9}>標準</StyleItem>
          <StyleItem type="button" $w={72} $size={9}>行間詰め</StyleItem>
          <StyleItem type="button" $w={60} $size={13}>見出し 1</StyleItem>
        </Gallery>
        <Foot text="スタイル" start={172} launch={false} />
      </Group>
    </Ribbon>
    <RulerStrip><TopRuler /></RulerStrip>
    <DocumentArea>
      <SideRuler><LeftRuler /></SideRuler>
      <Desk />
      <Paper>
        <MarginCorner />
        <CopilotMark type="button" aria-label="Copilot"><CopilotIcon /></CopilotMark>
        <Paragraph>
          <Bullet /><BulletTab><ArrowMark /></BulletTab>
          <Lead><Caret />登録者数<TabMark><ArrowMark /></TabMark></Lead>
          <ValueBox $color={BLUE} $w={78}>3051<ReturnMark /></ValueBox>
        </Paragraph>
        <Paragraph>
          <Bullet /><BulletTab><ArrowMark /></BulletTab>
          <Lead>金額<TabMark><ArrowMark /></TabMark></Lead>
          <ValueBox $color={GREEN} $w={118}>3051000<ReturnMark /></ValueBox>
        </Paragraph>
      </Paper>
    </DocumentArea>
  </WordWindow>
);

const Connectors = () => (
  <Annotations width="700" height="718" fill="none" strokeWidth="4" aria-hidden="true">
    <g stroke={BLUE}>
      <rect x="122" y="187" width="118" height="80" />
      <path d="M222 269v148h298v142" />
      <path d="M514 557h12l-6 10z" fill={BLUE} stroke="none" />
    </g>
    <g stroke={GREEN}>
      <rect x="250" y="186" width="119" height="81" />
      <path d="M371 228h306v414h-57" />
      <path d="M622 636v12l-10-6z" fill={GREEN} stroke="none" />
    </g>
  </Annotations>
);

export default function App() {
  return (
    <Page>
      <GlobalStyle />
      <Excel />
      <Word />
      <Connectors />
    </Page>
  );
}
